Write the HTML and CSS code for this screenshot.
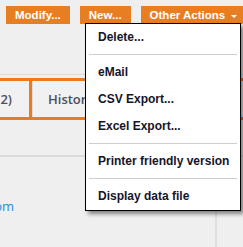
FILE: index.html
```html
<!DOCTYPE html>
<html>
<head>
  <link rel="stylesheet" href="styles.css">
</head>
<body>
  <div class="page">
    <div class="toolbar">
      <span class="btn">Modify...</span>
      <span class="btn">New...</span>
      <span class="btn btn-menu">Other Actions <span class="caret"></span></span>
    </div>

    <div class="tabs">
      <div class="tab tab-first"><span>Attachments (2)</span></div>
      <div class="tab">History</div>
    </div>

    <div class="content">
      <div class="cell cell-left">
        <div class="clip"><a class="link">info@example.com</a></div>
      </div>
      <div class="cell"></div>
    </div>

    <!-- dropdown for Other Actions -->
    <ul class="menu">
      <li>Delete...</li>
      <li class="sep"></li>
      <li>eMail</li>
      <li>CSV Export...</li>
      <li>Excel Export...</li>
      <li class="sep"></li>
      <li>Printer friendly version</li>
      <li class="sep"></li>
      <li>Display data file</li>
    </ul>
  </div>
</body>
</html>
```

FILE: styles.css
```css
/* Global */
html, body {
  margin: 0;
  padding: 0;
  height: 100%;
  background-color: #efefef;
  font-family: "Liberation Sans", Arial, sans-serif;
  overflow: hidden;
}

.page {
  position: relative;
  height: 100%;
  display: flex;
  flex-direction: column;
}

/* Toolbar buttons */
.toolbar {
  display: flex;
  gap: 10px;
  padding: 6px 0 50px 6px;
  height: 18px;
  border-bottom: 1px solid #d9d9d9;
}

.btn {
  display: flex;
  align-items: center;
  height: 18px;
  padding: 0 9px;
  background-color: #e87e22;
  color: #fff;
  font-size: 11.5px;
  font-weight: bold;
  white-space: nowrap;
}

.btn-menu {
  width: 84px;
}

.caret {
  margin-left: 6px;
  width: 0;
  height: 0;
  border-left: 3px solid transparent;
  border-right: 3px solid transparent;
  border-top: 3px solid #fff;
  margin-top: 2px;
}

/* Tabs */
.tabs {
  display: flex;
  margin-top: 3px;
  border-top: 3px solid #ee7a1c;
  border-bottom: 3px solid #ee7a1c;
  height: 36px;
}

.tab {
  display: flex;
  align-items: center;
  padding: 0 16px;
  border-left: 3px solid #ee7a1c;
  box-shadow: inset 1px 0 0 #dcdcdc;
  background-color: #f1f1f1;
  color: #4a4f5e;
  font-family: "Open Sans", sans-serif;
  font-size: 13px;
  font-weight: 600;
  white-space: nowrap;
}

.tab-first {
  width: 29px;
  padding: 0;
  border-left: 0;
  box-shadow: none;
  justify-content: flex-end;
  overflow: hidden;
}

.tab-first span {
  padding-right: 17px;
}

/* Content below tabs */
.content {
  display: flex;
  flex: 1;
  margin-top: 35px;
  border-top: 2px solid #dadada;
}

.cell-left {
  width: 215px;
  border-right: 2px solid #dedede;
  padding-top: 40px;
}

.clip {
  width: 14px;
  display: flex;
  justify-content: flex-end;
  overflow: hidden;
}

.link {
  color: #2b8dd0;
  font-family: "Open Sans", sans-serif;
  font-size: 13px;
  white-space: nowrap;
}

/* Dropdown menu */
.menu {
  position: absolute;
  top: 23px;
  left: 85px;
  width: 154px;
  margin: 0;
  padding: 0;
  list-style-type: none;
  background-color: #fff;
  border: 1px solid #000;
  box-shadow: 3px 3px 4px rgba(0, 0, 0, 0.45);
}

.menu li {
  height: 27px;
  line-height: 27px;
  padding-left: 12px;
  color: #15152a;
  font-size: 12px;
  font-weight: bold;
  white-space: nowrap;
}

.menu li.sep {
  height: 1px;
  padding: 0;
  margin: 3px 3px 4px 3px;
  background-color: #cfcfcf;
}
```
